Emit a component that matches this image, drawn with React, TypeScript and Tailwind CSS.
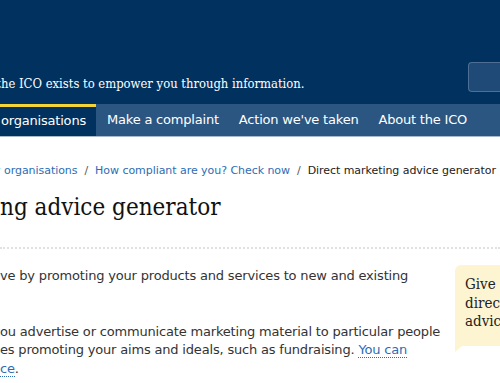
import React from "react";

const sans = { fontFamily: '"DejaVu Sans", Verdana, sans-serif' };
const serif = { fontFamily: '"DejaVu Serif Condensed", "DejaVu Serif", Georgia, serif', fontStretch: "condensed" as const };

function Cut({ at, pre, children, className = "" }: { at: number; pre: React.ReactNode; children: React.ReactNode; className?: string }) {
  return (
    <div className={"flex whitespace-nowrap " + className}>
      <div className="flex justify-end shrink-0" style={{ width: at }}>
        <span className="whitespace-nowrap">{pre}</span>
      </div>
      <span className="whitespace-nowrap">{children}</span>
    </div>
  );
}

export default function App() {
  return (
    <div className="w-[500px] h-[383px] overflow-hidden bg-white relative">
      <header className="h-[104px] bg-[#01325f] flex items-end justify-between">
        <Cut at={1} pre={<span style={serif}>t</span>} className="mb-[11px] text-[12.9px] text-white">
          <span style={serif}>he ICO exists to empower you through information.</span>
        </Cut>
        <div className="mb-[12px] w-[32px] h-[30px] rounded-l-[4px] border border-r-0 border-[#4d6f95] bg-[#1f4a77]" />
      </header>
      <nav
        className="h-[33px] bg-[#2b5682] flex items-stretch text-[13px] tracking-[-0.2px] text-white whitespace-nowrap border-b border-[#a9b9ca]"
        style={sans}
      >
        <div className="w-[96px] shrink-0 bg-[#01325f] border-t-[3px] border-[#f3d33a] flex items-center justify-end pr-[10px] pb-[2px]">
          <span>For organisations</span>
        </div>
        <span className="pl-[11px] pr-[10px] flex items-center">Make a complaint</span>
        <span className="px-[10px] flex items-center">Action we've taken</span>
        <span className="px-[10px] flex items-center">About the ICO</span>
      </nav>
      <main className="pt-[27px]">
        <div className="text-[11px] leading-[14px] tracking-[-0.05px]" style={sans}>
          <Cut
            at={0}
            pre={
              <span className="text-[#2d6db4]">
                Home<span className="text-[#555] mx-[7px]">/</span>For
              </span>
            }
          >
            <span className="text-[#2d6db4] pl-[4px]">organisations</span>
            <span className="text-[#555] mx-[7px]">/</span>
            <span className="text-[#2d6db4]">How compliant are you? Check now</span>
            <span className="text-[#555] mx-[7px]">/</span>
            <span className="text-[#222]">Direct marketing advice generator</span>
          </Cut>
        </div>
        <div className="mt-[12px] text-[24px] leading-[34px] text-[#111]" style={serif}>
          <Cut at={0} pre="Direct marketi">ng advice generator</Cut>
        </div>
        <div className="mt-[23px] border-b-2 border-dotted border-[#e2e2e2]" />
        <div className="flex">
          <div
            className="flex-1 min-w-0 pt-[18px] text-[13px] leading-[18.5px] tracking-[-0.18px] text-[#333]"
            style={sans}
          >
            <Cut at={0} pre="Your business can thri">
              ve by promoting your products and services to new and existing
            </Cut>
            <Cut at={0} pre="customers.">{""}</Cut>
            <div className="h-[18.5px]" />
            <Cut at={0} pre="This applies whenever y">
              ou advertise or communicate marketing material to particular people
            </Cut>
            <Cut at={0} pre="including messag">
              es promoting your aims and ideals, such as fundraising.{" "}
              <span className="text-[#2d6db4] border-b border-dotted border-[#2d6db4]">You can</span>
            </Cut>
            <Cut at={0} pre={<span className="text-[#2d6db4] border-b border-dotted border-[#2d6db4]">get advi</span>}>
              <span className="text-[#2d6db4] border-b border-dotted border-[#2d6db4]">ce</span>.
            </Cut>
          </div>
          <div className="w-[45px] shrink-0 mt-[16px]">
            <div
              className="bg-[#fdf5d2] rounded-tl-[6px] pl-[10px] pt-[10px] text-[15px] leading-[18.5px] text-[#222] whitespace-nowrap overflow-hidden h-[81px]"
              style={serif}
            >
              <div>Give</div>
              <div>direct</div>
              <div>advice</div>
            </div>
            <div className="w-0 h-0 border-t-[6px] border-t-[#fdf5d2] border-r-[7px] border-r-transparent" />
          </div>
        </div>
      </main>
    </div>
  );
}
